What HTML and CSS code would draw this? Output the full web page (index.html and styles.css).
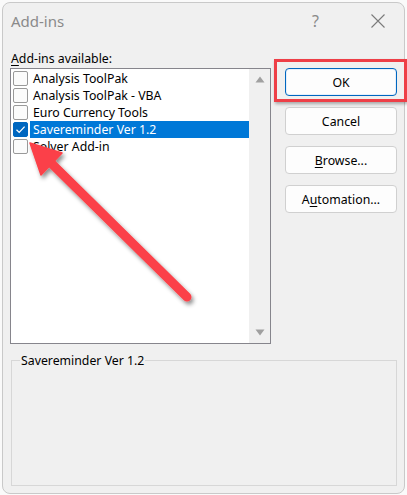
FILE: index.html
```html
<!DOCTYPE html>
<html>
<head>
<meta charset="utf-8">
<link rel="stylesheet" href="styles.css">
</head>
<body>
<div class="dialog">
  <div class="titlebar">
    <span class="title">Add-ins</span>
    <span class="help">?</span>
    <svg class="close" width="16" height="16" viewBox="0 0 16 16"><path d="M1.5 1.5 L14.5 14.5 M14.5 1.5 L1.5 14.5" stroke="#7a7a7a" stroke-width="1.1" fill="none"/></svg>
  </div>
  <div class="main">
    <div class="left">
      <div class="label"><u>A</u>dd-ins available:</div>
      <div class="listbox">
        <div class="items">
          <div class="item"><span class="cb"></span><span class="txt">Analysis ToolPak</span></div>
          <div class="item"><span class="cb"></span><span class="txt">Analysis ToolPak - VBA</span></div>
          <div class="item"><span class="cb"></span><span class="txt">Euro Currency Tools</span></div>
          <div class="item"><span class="cb checked"><svg width="13" height="13" viewBox="0 0 13 13"><path d="M2.5 6.8 L5.2 9.4 L10.6 3.6" stroke="#fff" stroke-width="1.3" fill="none"/></svg></span><span class="txt sel">Savereminder Ver 1.2</span></div>
          <div class="item"><span class="cb"></span><span class="txt">Solver Add-in</span></div>
        </div>
        <div class="scrollbar">
          <svg width="10" height="7" viewBox="0 0 10 7"><path d="M5 0.5 L9.5 6.5 L0.5 6.5 Z" fill="#a0a0a0"/></svg>
          <svg width="10" height="7" viewBox="0 0 10 7"><path d="M0.5 0.5 L9.5 0.5 L5 6.5 Z" fill="#a0a0a0"/></svg>
        </div>
      </div>
    </div>
    <div class="buttons">
      <div class="okwrap">
        <button class="btn ok">OK</button>
        <span class="redbox"></span>
      </div>
      <button class="btn">Cancel</button>
      <button class="btn"><u>B</u>rowse...</button>
      <button class="btn">A<u>u</u>tomation...</button>
    </div>
  </div>
  <fieldset class="group">
    <legend>Savereminder Ver 1.2</legend>
  </fieldset>
</div>
<svg class="arrow" width="407" height="495" viewBox="0 0 407 495">
  <defs>
    <filter id="sh" x="-20%" y="-20%" width="140%" height="140%">
      <feDropShadow dx="2" dy="3" stdDeviation="2" flood-color="#000" flood-opacity="0.45"/>
    </filter>
  </defs>
  <g filter="url(#sh)" fill="#fb4148" stroke="#fb4148">
    <line x1="187" y1="297" x2="48" y2="160" stroke-width="9" stroke-linecap="round"/>
    <polygon points="30,143 62,153 41,175" stroke-width="1.5" stroke-linejoin="round"/>
  </g>
</svg>
</body>
</html>
```
FILE: styles.css
```css
* { box-sizing: border-box; }
html, body { margin: 0; padding: 0; }
body {
  width: 407px;
  height: 495px;
  background: #fafafa;
  font-family: "Noto Sans", "Open Sans", sans-serif;
  font-size: 12.3px;
  color: #000;
  position: relative;
  overflow: hidden;
}
.dialog {
  position: relative;
  margin: 2px 0 0 2px;
  width: 403px;
  height: 492px;
  background: #f0f0f0;
  border: 1px solid #c9c9c9;
  border-radius: 8px;
  display: flex;
  flex-direction: column;
  padding: 0 0 0 7px;
}
.titlebar {
  height: 38px;
  display: flex;
  align-items: center;
  color: #8a8a8a;
}
.title {
  font-size: 15px;
  margin-left: 1px;
  margin-top: -2px;
}
.help {
  margin-left: auto;
  font-size: 16px;
  margin-top: -2px;
}
.close {
  margin-left: 51px;
  margin-right: 18px;
  margin-top: -3px;
}
.main {
  display: flex;
  gap: 14px;
}
.left { display: flex; flex-direction: column; }
.label {
  height: 27px;
  line-height: 17px;
  padding-top: 9px;
  margin-left: 1px;
  white-space: nowrap;
}
.label u { text-underline-offset: 2px; }
.listbox {
  width: 261px;
  height: 276px;
  border: 1px solid #86858c;
  background: #fff;
  display: flex;
}
.items {
  flex: 1;
  padding-top: 1px;
}
.item {
  height: 17px;
  display: flex;
  align-items: center;
}
.cb {
  width: 15px;
  height: 15px;
  margin-left: 2px;
  margin-right: 2px;
  border: 1px solid #999;
  border-radius: 2px;
  background: #fbfbfb;
  flex: none;
  display: flex;
  align-items: center;
  justify-content: center;
}
.cb.checked {
  background: #0067c0;
  border-color: #0067c0;
}
.txt {
  height: 17px;
  line-height: 17px;
  padding-left: 3px;
  flex: 1;
  white-space: nowrap;
}
.txt.sel {
  background: #0078d7;
  color: #fff;
}
.scrollbar {
  width: 21px;
  background: #f0f0f0;
  display: flex;
  flex-direction: column;
  justify-content: space-between;
  align-items: center;
  padding: 7px 0 7px 0;
}
.buttons {
  display: flex;
  flex-direction: column;
  gap: 11px;
  padding-top: 27px;
}
.okwrap { position: relative; }
.btn {
  display: block;
  width: 112px;
  height: 28px;
  background: #fdfdfd;
  border: 1px solid #d0d0d0;
  border-radius: 4px;
  font-family: inherit;
  font-size: 12.3px;
  color: #000;
  padding: 0;
}
.btn.ok {
  border: 1px solid #0067c0;
  box-shadow: inset 0 0 0 1px #e6effa;
}
.btn u { text-underline-offset: 2px; }
.redbox {
  position: absolute;
  left: -11px;
  top: -9px;
  width: 133px;
  height: 43px;
  border: 3px solid #ee3f47;
  box-shadow: 1px 2px 3px rgba(0,0,0,0.3);
  pointer-events: none;
}
.group {
  margin: 9px 0 0 1px;
  width: 386px;
  height: 133px;
  border: 1px solid #d7d7d7;
  padding: 0;
}
.group legend {
  margin-left: 8px;
  padding: 0 1px;
  font-size: 12.3px;
  line-height: 15px;
}
.arrow {
  position: absolute;
  left: 0;
  top: 0;
  pointer-events: none;
}
```
